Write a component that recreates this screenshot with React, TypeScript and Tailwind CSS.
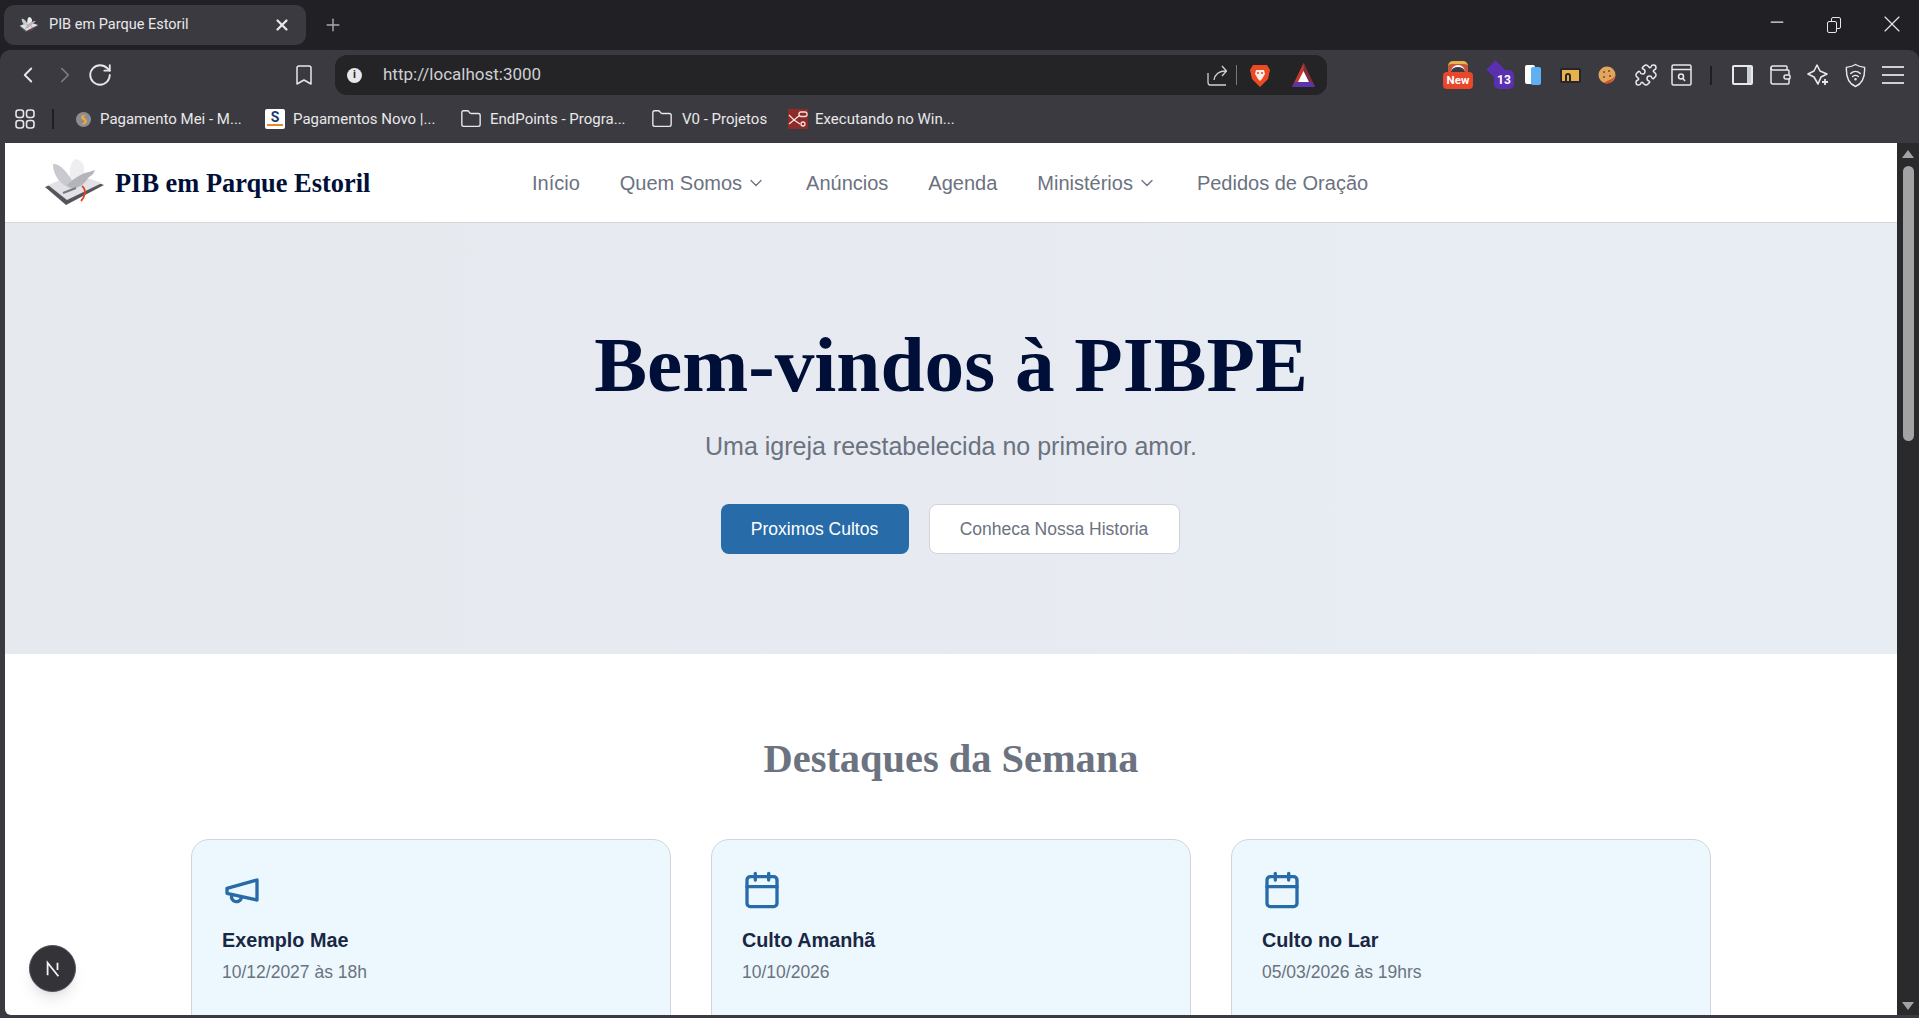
import React from 'react';
import {
  Bookmark,
  Calendar,
  ChevronDown,
  ChevronLeft,
  ChevronRight,
  Folder,
  Minus,
  Plus,
  Puzzle,
  RotateCw,
  Wallet,
  X,
} from 'lucide-react';

const Dove = ({ className }: { className?: string }) => (
  <svg viewBox="0 0 60 48" className={className}>
    <path d="M0 28 L30 16 L59 26 L21 46 Z" fill="#55565c" />
    <path d="M3 26 L30 15 L57 24 L22 41 Z" fill="#e2e2e6" />
    <path d="M8 5 C13 4 20 10 26 20 L28 30 C18 28 8 18 8 5 Z" fill="#c9cacf" />
    <path d="M31 0 C27 1 24 8 25 18 L30 24 L38 16 C41 8 38 2 31 0 Z" fill="#eeeef0" />
    <path d="M22 26 C28 32 38 28 43 19 L48 15 L50 11 L44 13 C38 14 30 18 22 26 Z" fill="#b4b5ba" />
    <path d="M18 34 L31 29" stroke="#77787e" strokeWidth="2" />
    <path d="M37 27 C42 31 40 38 36 42" stroke="#e3421f" strokeWidth="1.8" fill="none" />
  </svg>
);

const Megaphone = ({ className }: { className?: string }) => (
  <svg viewBox="0 0 24 24" fill="none" stroke="currentColor" strokeWidth={2} strokeLinecap="round" strokeLinejoin="round" className={className}>
    <path d="m3 11 18-5v12L3 14v-3z" />
    <path d="M11.6 16.8a3 3 0 1 1-5.8-1.6" />
  </svg>
);

const NavLink = ({ label, caret }: { label: string; caret?: boolean }) => (
  <a className="flex items-center text-[20px] text-[#6b7280]">
    {label}
    {caret && <ChevronDown className="ml-[4px] h-[20px] w-[20px]" strokeWidth={1.6} />}
  </a>
);

const Card = ({ icon, title, date }: { icon: React.ReactNode; title: string; date: string }) => (
  <div className="h-[300px] w-[480px] rounded-[18px] border border-[#d0d5da] bg-[#ecf8fe] p-[30px]">
    {icon}
    <h3 className="mt-[16px] text-[19.8px] leading-[28px] font-bold text-[#1a2744]">{title}</h3>
    <p className="mt-[4px] text-[17.5px] leading-[28px] text-[#6b7280]">{date}</p>
  </div>
);

const Bookmarks = () => (
  <div className="mb-[5px] flex h-[38px] items-center pl-[15px] font-['Roboto',sans-serif] text-[15px] text-[#e8e8ea]">
    <svg viewBox="0 0 20 20" className="h-[20px] w-[20px]" fill="none" stroke="#e6e6e8" strokeWidth="1.6">
      <rect x="1" y="1" width="7.5" height="7.5" rx="2.5" />
      <rect x="11.5" y="1" width="7.5" height="7.5" rx="2.5" />
      <rect x="1" y="11.5" width="7.5" height="7.5" rx="2.5" />
      <rect x="11.5" y="11.5" width="7.5" height="7.5" rx="2.5" />
    </svg>
    <span className="ml-[17px] h-[20px] w-[2px] bg-[#1f1f23]" />
    <svg viewBox="0 0 18 18" className="ml-[21px] h-[17px] w-[17px]">
      <circle cx="9" cy="9" r="8" fill="#8b8d92" />
      <path d="M12 4 C7 3 5 7 8 9 C11 10 11 13 6 14 C11 16 15 11 11 8 C9 7 9 5 12 4 Z" fill="#f0a93a" />
    </svg>
    <span className="ml-[8px] w-[143px] whitespace-nowrap">Pagamento Mei - M...</span>
    <span className="ml-[22px] flex h-[20px] w-[20px] flex-col items-center rounded-[2px] bg-white text-[14px] leading-[16px] font-bold text-[#1e3a6e]">
      S
      <span className="mt-[-1px] h-[2px] w-[16px] bg-[#e8862a]" />
    </span>
    <span className="ml-[8px] w-[140px] whitespace-nowrap">Pagamentos Novo |...</span>
    <Folder className="ml-[27px] h-[22px] w-[22px]" strokeWidth={1.5} />
    <span className="ml-[8px] w-[134px] whitespace-nowrap">EndPoints - Progra...</span>
    <Folder className="ml-[27px] h-[22px] w-[22px]" strokeWidth={1.5} />
    <span className="ml-[9px] w-[85px] whitespace-nowrap">V0 - Projetos</span>
    <span className="ml-[21px] flex h-[20px] w-[20px] items-center justify-center bg-[#8c2b27]">
      <svg viewBox="0 0 20 20" className="h-[20px] w-[20px]" fill="none" stroke="#f3e3e0" strokeWidth="1.3">
        <path d="M1 6 L6 11 L1 15 M6 11 L12 6 M6 11 L12 15" />
        <rect x="11" y="3" width="8" height="4.5" rx="2" />
        <circle cx="15" cy="15" r="2" />
      </svg>
    </span>
    <span className="ml-[7px] whitespace-nowrap">Executando no Win...</span>
  </div>
);

const Extensions = () => (
  <div className="ml-[116px] flex items-center text-[#e8e8ea]">
    <span className="relative block h-[28px] w-[30px]">
      <span className="absolute top-0 left-[5px] h-[16px] w-[20px] rounded-t-[5px] border-t-[3px] border-[#e9b44c] bg-[#c8563a]" />
      <span className="absolute top-[4px] left-[8px] h-[12px] w-[14px] rounded-t-full border-t-2 border-white bg-[#3b3a40]" />
      <span className="absolute bottom-0 left-0 flex h-[17px] w-[30px] items-center justify-center rounded-[4px] bg-[#e8472b] font-['Roboto',sans-serif] text-[11.5px] font-bold text-white">New</span>
    </span>
    <span className="relative ml-[13px] block h-[28px] w-[28px]">
      <span className="absolute top-[2px] left-[3px] h-[13px] w-[13px] rotate-45 bg-[#5a2fb0]" />
      <span className="absolute right-0 bottom-0 flex h-[19px] w-[20px] items-center justify-center rounded-[5px] bg-[#5a2fb0] font-['Roboto',sans-serif] text-[12px] font-bold text-white">13</span>
    </span>
    <span className="relative ml-[11px] block h-[20px] w-[16px]">
      <span className="absolute top-0 left-0 h-[19px] w-[10px] rounded-[2px] bg-white" />
      <span className="absolute top-[2px] right-0 h-[18px] w-[10px] rounded-[2px] bg-[#5eb0f2]" />
    </span>
    <span className="relative ml-[19px] block h-[15px] w-[21px] rounded-[2px] border-2 border-[#26262a] bg-[#e9b14c]">
      <span className="absolute top-[3px] left-[3px] h-[10px] w-[6px] rounded-t-[3px] border-2 border-b-0 border-[#26262a]" />
    </span>
    <svg viewBox="0 0 18 20" className="ml-[17px] h-[20px] w-[18px]">
      <circle cx="9" cy="10" r="8.5" fill="#e2a55c" />
      <path d="M17 11 A8.5 8.5 0 0 1 6 18 L9 16 L14 14 Z" fill="#dd4a2a" />
      <circle cx="6" cy="7" r="1" fill="#7a4a24" />
      <circle cx="11" cy="6" r="1" fill="#7a4a24" />
      <circle cx="12" cy="11" r="1" fill="#7a4a24" />
      <circle cx="6" cy="12" r="1" fill="#7a4a24" />
    </svg>
    <Puzzle className="ml-[18px] h-[24px] w-[24px]" strokeWidth={1.5} />
    <svg viewBox="0 0 21 24" className="ml-[13px] h-[24px] w-[21px]" fill="none" stroke="#e8e8ea" strokeWidth="1.5">
      <rect x="1" y="2" width="19" height="20" rx="1.5" />
      <path d="M1 6.5 H20" />
      <circle cx="10" cy="13.5" r="2.5" />
      <path d="M12 15.5 L14 18" />
    </svg>
    <span className="ml-[18px] h-[19px] w-[2px] bg-[#1f1f23]" />
    <span className="ml-[20px] flex h-[20px] w-[21px] justify-end rounded-[2px] border-2 border-[#e8e8ea]">
      <span className="h-full w-[4px] bg-[#c9cfd8]" />
    </span>
    <Wallet className="ml-[15px] h-[24px] w-[24px]" strokeWidth={1.5} />
    <svg viewBox="0 0 24 24" className="ml-[14px] h-[24px] w-[24px]" fill="none" stroke="#e8e8ea" strokeWidth="1.6" strokeLinejoin="round">
      <path d="M11 2 L14 8 L21 11 L15 14 L12 21 L8 14 L2 11 L8 8 Z" />
      <path d="M19 16 V22 M16 19 H22" strokeWidth="1.8" />
    </svg>
    <svg viewBox="0 0 22 26" className="ml-[15px] h-[25px] w-[21px]" fill="none" stroke="#e8e8ea" strokeWidth="1.5" strokeLinecap="round">
      <path d="M11 1.5 C14 3.5 17 4 20.5 4.5 C21 13 19 21 11 24.5 C3 21 1 13 1.5 4.5 C5 4 8 3.5 11 1.5 Z" />
      <path d="M6 11 C9 8 13 8 16 11 M8 14 C10 12.5 12 12.5 14 14" />
      <circle cx="11" cy="17" r="0.6" />
    </svg>
    <span className="ml-[16px] flex h-[18px] w-[22px] flex-col justify-between">
      <span className="h-[2px] bg-[#d0d0d4]" />
      <span className="h-[2px] bg-[#d0d0d4]" />
      <span className="h-[2px] bg-[#d0d0d4]" />
    </span>
  </div>
);

const Toolbar = () => (
  <div className="flex h-[50px] items-center pl-[15px] text-[#e8e8ea]">
    <ChevronLeft className="h-[28px] w-[26px]" strokeWidth={1.7} />
    <ChevronRight className="ml-[11px] h-[28px] w-[26px] text-[#7f7f87]" strokeWidth={1.5} />
    <RotateCw className="ml-[9px] h-[26px] w-[26px]" strokeWidth={1.7} />
    <Bookmark className="ml-[179px] h-[24px] w-[24px]" strokeWidth={1.5} />
    <div className="ml-[19px] flex h-[40px] w-[992px] items-center rounded-[12px] bg-[#242427] pr-[12px] pl-[12px]">
      <span className="flex h-[15px] w-[15px] items-center justify-center rounded-full bg-[#e8e8ea] font-['Roboto',sans-serif] text-[11px] font-bold text-[#242427]">i</span>
      <span className="ml-[21px] font-['Roboto',sans-serif] text-[17px] text-[#cfcfd3]">http://localhost:3000</span>
      <svg viewBox="0 0 22 22" className="ml-auto h-[22px] w-[22px]" fill="none" stroke="#cfcfd3" strokeWidth="1.3" strokeLinejoin="round">
        <path d="M2 9 V18 Q2 21 4 21 H20" />
        <path d="M8 16 C9 10 13 7 20 7 M16 2 L20.5 7 L16 12" />
      </svg>
      <span className="ml-[8px] h-[20px] w-px bg-[#77777d]" />
      <svg viewBox="0 0 20 23" className="ml-[13px] h-[23px] w-[20px]">
        <path d="M3 1 H17 L20 6 L18 15 L10 23 L2 15 L0 6 Z" fill="#ec4a24" />
        <path d="M6 6 H14 L15 10 L12 15 L10 17 L8 15 L5 10 Z" fill="#fbeee6" />
        <path d="M7 9 H9 M11 9 H13" stroke="#ec4a24" strokeWidth="1.4" />
      </svg>
      <svg viewBox="0 0 23 24" className="ml-[22px] h-[24px] w-[23px]">
        <path d="M11.5 0 L23 24 H0 Z" fill="#c43a2a" />
        <path d="M11.5 0 L23 24 H12 Z" fill="#7d2d3a" />
        <path d="M11.5 8 L17 19 H6 Z" fill="#ffffff" />
        <path d="M3 19 H20 L23 24 H0 Z" fill="#5b35a8" />
      </svg>
    </div>
    <Extensions />
  </div>
);

const TitleBar = () => (
  <div className="flex h-[50px] items-start bg-[#202025] pt-[5px] pl-[4px] text-[#e8e8ea]">
    <div className="flex h-[40px] w-[302px] items-center rounded-[10px] bg-[#3b3a40] pr-[15px] pl-[15px]">
      <Dove className="h-[16px] w-[20px]" />
      <span className="ml-[10px] font-['Roboto',sans-serif] text-[14.5px]">PIB em Parque Estoril</span>
      <X className="ml-auto h-[18px] w-[18px]" strokeWidth={3} />
    </div>
    <Plus className="mt-[10px] ml-[17px] h-[20px] w-[20px] text-[#a9a9ae]" strokeWidth={1.7} />
    <Minus className="mt-[7px] ml-auto h-[20px] w-[20px]" strokeWidth={1.5} />
    <span className="relative mt-[12px] ml-[40px] block h-[16px] w-[14px]">
      <span className="absolute top-0 right-0 h-[12px] w-[10px] rounded-[2px] border border-[#e8e8ea]" />
      <span className="absolute bottom-0 left-0 h-[12px] w-[10px] rounded-[2px] border border-[#e8e8ea] bg-[#202025]" />
    </span>
    <X className="mt-[5px] mr-[13px] ml-[37px] h-[28px] w-[28px]" strokeWidth={1} />
  </div>
);

const Scrollbar = () => (
  <div className="flex w-[22px] flex-col items-center bg-[#2a2a2d] pt-[7px] pb-[5px]">
    <span className="h-0 w-0 border-r-[6px] border-b-[8px] border-l-[6px] border-r-transparent border-b-[#a3a3a3] border-l-transparent" />
    <span className="mt-[8px] h-[275px] w-[11px] rounded-full bg-[#a3a3a3]" />
    <span className="mt-auto h-0 w-0 border-t-[8px] border-r-[6px] border-l-[6px] border-t-[#a3a3a3] border-r-transparent border-l-transparent" />
  </div>
);

const App = () => {
  return (
    <div className="flex h-screen flex-col overflow-hidden bg-[#202025] font-['Liberation_Sans',Arial,sans-serif]">
      <TitleBar />
      <div className="flex min-h-0 flex-1 flex-col rounded-t-[10px] bg-[#3b3a40] pb-[3px]">
        <Toolbar />
        <Bookmarks />
        <div className="flex min-h-0 flex-1 pl-[5px]">
          <main className="relative min-w-0 flex-1 overflow-hidden rounded-bl-[6px] bg-white">
            <header className="flex h-[80px] items-center border-b border-[#d5d7da] pl-[40px]">
              <Dove className="h-[48px] w-[60px]" />
              <span className="mt-[2px] ml-[10px] font-['Liberation_Serif',serif] text-[26.4px] font-bold text-[#000f38]">PIB em Parque Estoril</span>
              <nav className="absolute top-0 left-[527px] flex h-[80px] items-center gap-[40px]">
                <NavLink label="Início" />
                <NavLink label="Quem Somos" caret />
                <NavLink label="Anúncios" />
                <NavLink label="Agenda" />
                <NavLink label="Ministérios" caret />
                <NavLink label="Pedidos de Oração" />
              </nav>
            </header>
            <section className="flex h-[431px] flex-col items-center bg-linear-to-r from-[#e6e9ee] to-[#e8edf4] pt-[91px]">
              <h1 className="font-['Liberation_Serif',serif] text-[79.3px] leading-[100px] font-bold text-[#000f38]">Bem-vindos à PIBPE</h1>
              <p className="mt-[16px] text-[25px] leading-[32px] text-[#6b7280]">Uma igreja reestabelecida no primeiro amor.</p>
              <div className="mt-[42px] mr-[2px] flex gap-[20px]">
                <button className="h-[50px] w-[188px] rounded-[8px] bg-[#276ba8] text-[17.5px] text-white">Proximos Cultos</button>
                <button className="h-[50px] w-[251px] rounded-[8px] border border-[#d0d3d8] bg-white text-[17.5px] text-[#6b7280]">Conheca Nossa Historia</button>
              </div>
            </section>
            <section className="pt-[80px]">
              <h2 className="text-center font-['Liberation_Serif',serif] text-[40.4px] leading-[50px] font-bold text-[#6b7280]">Destaques da Semana</h2>
              <div className="mt-[55px] flex justify-center gap-[40px]">
                <Card icon={<Megaphone className="h-[40px] w-[40px] text-[#276ba8]" />} title="Exemplo Mae" date="10/12/2027 às 18h" />
                <Card icon={<Calendar className="h-[40px] w-[40px] text-[#276ba8]" strokeWidth={2} />} title="Culto Amanhã" date="10/10/2026" />
                <Card icon={<Calendar className="h-[40px] w-[40px] text-[#276ba8]" strokeWidth={2} />} title="Culto no Lar" date="05/03/2026 às 19hrs" />
              </div>
            </section>
            <div className="absolute bottom-[23px] left-[24px] flex h-[47px] w-[47px] items-center justify-center rounded-full border border-[#50505a] bg-[#333338] shadow-lg">
              <svg viewBox="0 0 20 20" className="h-[18px] w-[18px]" fill="none" stroke="#f2f2f2" strokeWidth="2">
                <path d="M4 17 V3 L16 18" />
                <path d="M15 3 V11" />
              </svg>
            </div>
          </main>
          <Scrollbar />
        </div>
      </div>
    </div>
  );
};

export default App;
